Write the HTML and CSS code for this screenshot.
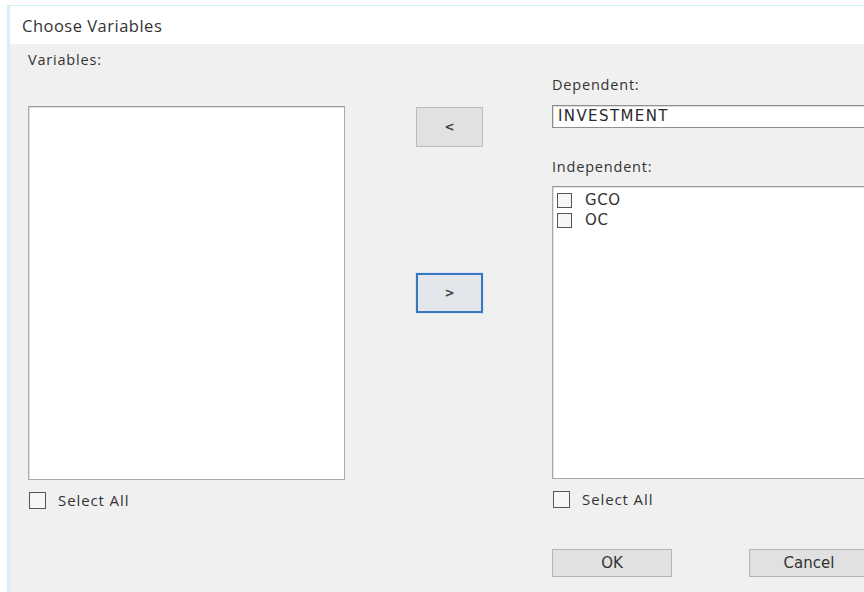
FILE: index.html
```html
<!DOCTYPE html>
<html lang="en">
<head>
<meta charset="utf-8">
<title>Choose Variables</title>
<link rel="stylesheet" href="styles.css">
</head>
<body>
<div class="window">
  <div class="titlebar">Choose Variables</div>
  <div class="content">
    <div class="col col-left">
      <div class="label label-vars">Variables:</div>
      <div class="listbox listbox-left"></div>
      <label class="check select-all"><span class="box"></span><span>Select All</span></label>
    </div>
    <div class="col col-mid">
      <button class="btn btn-move btn-back">&lt;</button>
      <button class="btn btn-move btn-fwd focused">&gt;</button>
    </div>
    <div class="col col-right">
      <div class="label label-dep">Dependent:</div>
      <div class="field">INVESTMENT</div>
      <div class="label label-indep">Independent:</div>
      <div class="listbox listbox-right">
        <label class="item"><span class="box"></span><span>GCO</span></label>
        <label class="item"><span class="box"></span><span>OC</span></label>
      </div>
      <label class="check select-all"><span class="box"></span><span>Select All</span></label>
      <div class="actions">
        <button class="btn btn-action">OK</button>
        <button class="btn btn-action">Cancel</button>
      </div>
    </div>
  </div>
</div>
</body>
</html>
```

FILE: styles.css
```css
html, body {
  margin: 0;
  padding: 0;
  background: #ffffff;
  width: 864px;
  height: 592px;
  overflow: hidden;
}

body {
  font-family: "Open Sans", "Noto Sans", sans-serif;
  color: #2a2a2a;
  padding: 5px 0 0 7px;
  box-sizing: border-box;
}

.window {
  border-top: 1px solid #cdeff7;
  border-left: 3px solid #d6eef5;
  height: 600px;
  background: #f0f0f0;
}

.titlebar {
  background: #ffffff;
  height: 38px;
  box-sizing: border-box;
  padding: 9px 0 0 12px;
  font-size: 16.5px;
  line-height: 22px;
  letter-spacing: 0.5px;
  color: #333;
}

.content {
  display: flex;
  padding-left: 18px;
}

.col {
  display: flex;
  flex-direction: column;
  flex: none;
}

.col-left {
  width: 317px;
}

.col-mid {
  width: 67px;
  margin-left: 71px;
}

.col-right {
  width: 330px;
  margin-left: 69px;
}

.label {
  font-size: 14.5px;
  line-height: 16px;
  letter-spacing: 0.8px;
  color: #333;
}

.label-vars {
  margin-top: 8px;
}

.listbox {
  background: #ffffff;
  border: 1px solid #a8a8a8;
  border-top-color: #9a9a9a;
  box-shadow: inset 1px 1px 0 #e2e2e2;
  box-sizing: border-box;
}

.listbox-left {
  margin-top: 38px;
  height: 374px;
}

.check {
  display: flex;
  align-items: center;
  font-size: 15px;
  letter-spacing: 0.9px;
  color: #333;
  height: 16px;
}

.select-all {
  margin-top: 12px;
  margin-left: 1px;
}

.box {
  display: inline-block;
  width: 15px;
  height: 15px;
  border: 1px solid #555;
  background: #f6f6f6;
  flex: none;
}

.select-all .box {
  margin-right: 12px;
}

.btn {
  font-family: "DejaVu Sans", sans-serif;
  background: #e1e1e1;
  border: 1px solid #bdbdbd;
  color: #444;
  padding: 0;
  box-sizing: border-box;
}

.btn-move {
  width: 67px;
  height: 40px;
  font-size: 12px;
  font-weight: bold;
}

.btn-back {
  margin-top: 63px;
}

.btn-fwd {
  margin-top: 126px;
}

.focused {
  border: 2px solid #3a76c2;
  box-shadow: 0 0 0 1px #d6e8f8;
  background: #e3e6ea;
}

.label-dep {
  margin-top: 33px;
}

.field {
  margin-top: 12px;
  height: 23px;
  box-sizing: border-box;
  background: #ffffff;
  border: 1px solid #8e8e8e;
  box-shadow: inset 1px 1px 0 #dcdcdc;
  font-family: "DejaVu Sans", sans-serif;
  font-size: 15px;
  line-height: 18px;
  letter-spacing: 1.4px;
  padding: 1px 0 0 5px;
  color: #2a2a2a;
}

.label-indep {
  margin-top: 31px;
}

.listbox-right {
  margin-top: 11px;
  height: 293px;
  padding: 3px 0 0 4px;
}

.item {
  display: flex;
  align-items: center;
  height: 20px;
  font-family: "DejaVu Sans", sans-serif;
  font-size: 15px;
  letter-spacing: 0.6px;
  color: #333;
}

.item .box {
  width: 13px;
  height: 13px;
  margin-right: 13px;
}

.actions {
  display: flex;
  gap: 77px;
  margin-top: 42px;
}

.btn-action {
  width: 120px;
  height: 28px;
  font-family: "DejaVu Sans", sans-serif;
  font-size: 15px;
  color: #333;
  border-color: #b4b4b4;
}
```
